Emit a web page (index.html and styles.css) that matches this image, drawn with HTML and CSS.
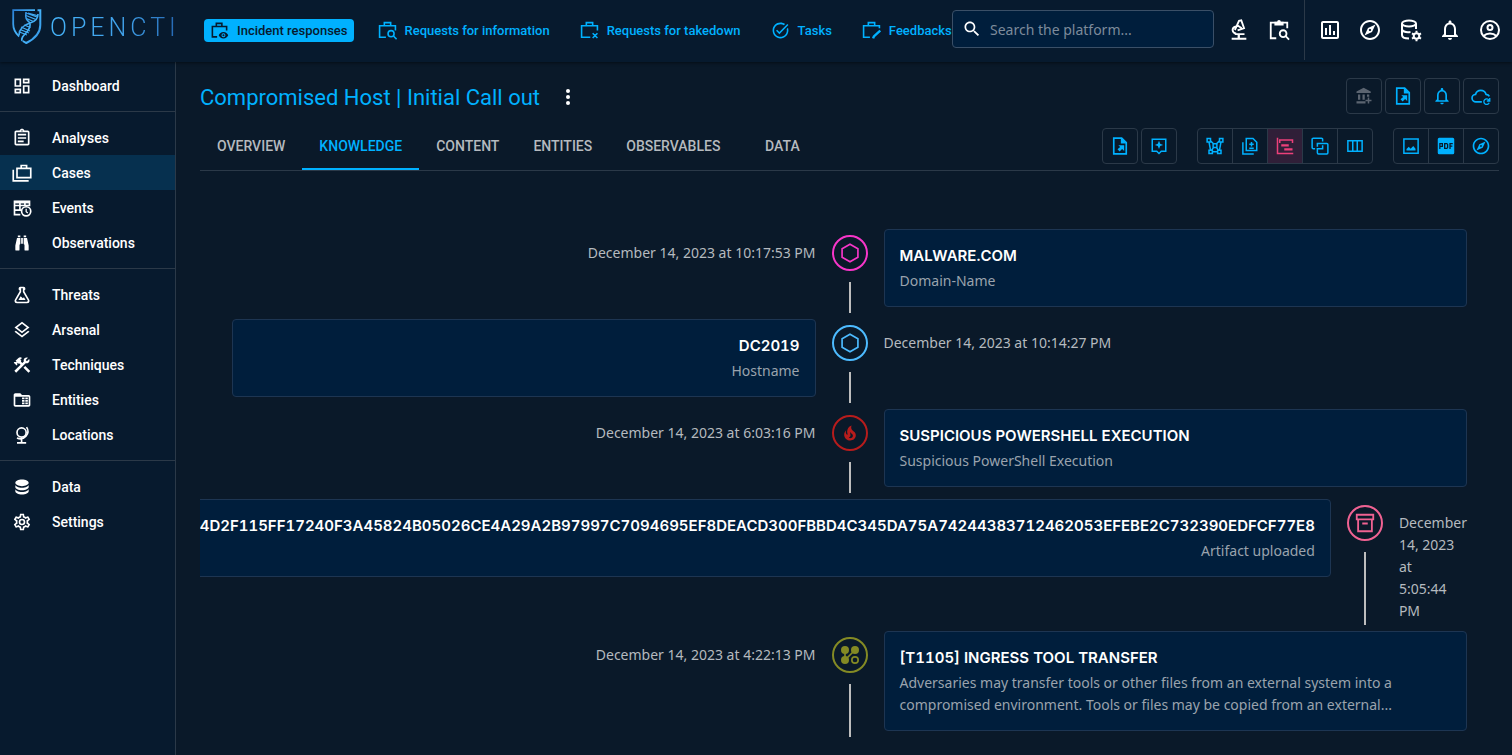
FILE: index.html
```html
<!DOCTYPE html>
<html lang="en">
<head>
<meta charset="utf-8">
<title>OpenCTI - Compromised Host</title>
<link rel="stylesheet" href="styles.css">
</head>
<body>
<svg class="sprite" aria-hidden="true">
  <symbol id="dashboard" viewBox="0 0 24 24"><path d="M19 5v2h-4V5h4M9 5v6H5V5h4m10 8v6h-4v-6h4M9 17v2H5v-2h4M21 3h-8v6h8V3zM11 3H3v10h8V3zm10 8h-8v10h8V11zm-10 4H3v6h8v-6z"/></symbol>
  <symbol id="analyses" viewBox="0 0 24 24"><path d="M7 15h7v2H7zm0-4h10v2H7zm0-4h10v2H7zm12-4h-4.180C14.400 1.840 13.300 1 12 1c-1.300 0-2.400.84-2.820 2H5c-1.100 0-2 .9-2 2v14c0 1.100.9 2 2 2h14c1.100 0 2-.9 2-2V5c0-1.100-.9-2-2-2zm-7-.25c.41 0 .75.34.75.75s-.34.75-.75.75-.75-.34-.75-.75.34-.75.75-.75zM19 19H5V5h14v14z"/></symbol>
  <symbol id="cases" viewBox="0 0 24 24"><g class="line"><path d="M6 6.500h16.500v11H6zM11 6V3h6.500v3M1.500 8v13.500H20"/></g></symbol>
  <symbol id="events" viewBox="0 0 24 24"><g class="line"><path d="M10 20H3V4h18v6M3 9h18M3 14.500h8M9.500 4v10M15.500 4v5"/><path d="M3 5h18" stroke-width="3"/><circle cx="17" cy="16" r="5.500"/><path d="M17 13v3.500l2 1.500" stroke-width="1.500"/></g></symbol>
  <symbol id="binoculars" viewBox="0 0 24 24"><path d="M11 6h2v7h-2V6M9 20a1 1 0 0 1-1 1H5a1 1 0 0 1-1-1v-5l2-9h4v7a1 1 0 0 1-1 1v6m1-15H7V3h3v2m5 15v-6a1 1 0 0 1-1-1V6h4l2 9v5a1 1 0 0 1-1 1h-3a1 1 0 0 1-1-1M14 5V3h3v2h-3z"/></symbol>
  <symbol id="flask" viewBox="0 0 24 24"><path d="M5 19a1 1 0 0 0 1 1h12a1 1 0 0 0 1-1c0-.21-.07-.41-.18-.57L13 8.350V4h-2v4.350L5.180 18.430c-.11.16-.18.36-.18.57m1 3a3 3 0 0 1-3-3c0-.6.18-1.160.5-1.630L9 7.810V6a1 1 0 0 1-1-1V4a2 2 0 0 1 2-2h4a2 2 0 0 1 2 2v1a1 1 0 0 1-1 1v1.810l5.500 9.560c.32.47.5 1.030.5 1.630a3 3 0 0 1-3 3H6m7-6l1.340-1.340L16.270 18H7.730l2.660-4.610L13 16z"/></symbol>
  <symbol id="layers" viewBox="0 0 24 24"><path d="M11.990 18.540l-7.370-5.730L3 14.070l9 7 9-7-1.630-1.270-7.380 5.740zM12 16l7.360-5.730L21 9l-9-7-9 7 1.630 1.270L12 16zm0-11.470L17.740 9 12 13.470 6.260 9 12 4.530z"/></symbol>
  <symbol id="tools" viewBox="0 0 24 24"><path d="M13.780 15.170l2.120-2.120 6 6-2.120 2.120zM17.500 10c1.930 0 3.500-1.570 3.500-3.500 0-.58-.16-1.120-.41-1.600l-2.700 2.700-1.490-1.490 2.700-2.700c-.48-.25-1.020-.41-1.600-.41C15.570 3 14 4.570 14 6.500c0 .41.08.8.21 1.160l-1.850 1.850-1.780-1.780.71-.71-1.410-1.410L12 3.490c-1.170-1.170-3.070-1.170-4.240 0L4.220 7.030l1.410 1.410H2.810l-.71.71 3.540 3.540.71-.71V9.150l1.410 1.410.71-.71 1.780 1.780-7.410 7.410 2.120 2.120L16.340 9.790c.36.13.75.21 1.160.21z"/></symbol>
  <symbol id="folder" viewBox="0 0 24 24"><path d="M20 6h-8l-2-2H4C2.900 4 2 4.900 2 6v12c0 1.100.9 2 2 2h16c1.100 0 2-.9 2-2V8c0-1.100-.9-2-2-2M4 18V8h16v10zM12 9h3v2h-3zm4 0h3v2h-3zm-4 3h3v2h-3zm4 0h3v2h-3zm-4 3h3v2h-3zm4 0h3v2h-3z"/></symbol>
  <symbol id="globe" viewBox="0 0 24 24"><g class="line"><circle cx="11.500" cy="9" r="5.500"/><path d="M17.500 2.500a9 9 0 0 1-11.500 13M11.500 17.500V21M6 21.500h11"/></g></symbol>
  <symbol id="database" viewBox="0 0 24 24"><path d="M12 3C7.580 3 4 4.790 4 7s3.580 4 8 4 8-1.790 8-4-3.580-4-8-4M4 9v3c0 2.210 3.580 4 8 4s8-1.790 8-4V9c0 2.210-3.580 4-8 4s-8-1.790-8-4m0 5v3c0 2.210 3.580 4 8 4s8-1.790 8-4v-3c0 2.210-3.580 4-8 4s-8-1.790-8-4z"/></symbol>
  <symbol id="cog" viewBox="0 0 24 24"><path d="M12 8a4 4 0 0 1 4 4 4 4 0 0 1-4 4 4 4 0 0 1-4-4 4 4 0 0 1 4-4m0 2a2 2 0 0 0-2 2 2 2 0 0 0 2 2 2 2 0 0 0 2-2 2 2 0 0 0-2-2m-2 12c-.25 0-.46-.18-.5-.42l-.37-2.650c-.63-.25-1.170-.59-1.690-.99l-2.490 1.010c-.22.08-.49 0-.61-.22l-2-3.460a.493.493 0 0 1 .12-.64l2.110-1.660L4.500 12l.07-1-2.110-1.630a.493.493 0 0 1-.12-.64l2-3.460c.12-.22.39-.31.61-.22l2.490 1c.52-.39 1.060-.73 1.690-.98l.37-2.650c.04-.24.25-.42.5-.42h4c.25 0 .46.18.5.42l.37 2.650c.63.25 1.170.59 1.690.98l2.490-1c.22-.09.49 0 .61.22l2 3.460c.13.22.07.49-.12.64L19.430 11l.07 1-.07 1 2.110 1.630c.19.15.25.42.12.64l-2 3.460c-.12.22-.39.31-.61.22l-2.490-1c-.52.39-1.060.73-1.690.98l-.37 2.650c-.04.24-.25.42-.5.42h-4m1.250-18l-.37 2.610c-1.200.25-2.260.89-3.030 1.780L5.440 7.350l-.75 1.300L6.800 10.200a5.550 5.550 0 0 0 0 3.600l-2.120 1.560.75 1.300 2.430-1.040c.77.88 1.820 1.520 3.010 1.760l.37 2.620h1.520l.37-2.610c1.190-.25 2.240-.89 3.010-1.770l2.430 1.040.75-1.300-2.120-1.550c.4-1.170.4-2.440 0-3.610l2.110-1.550-.75-1.300-2.410 1.040a5.420 5.420 0 0 0-3.030-1.770L12.750 4h-1.500z"/></symbol>
  <symbol id="case-eye" viewBox="0 0 24 24"><g class="line"><path d="M9 20H3V7h18v5M8 7V3h7v4"/></g><path fill-rule="evenodd" d="M17 14c-3 0-5 1.800-6 4 1 2.200 3 4 6 4s5-1.800 6-4c-1-2.200-3-4-6-4zm0 1.500a2.500 2.500 0 1 1 0 5 2.500 2.500 0 0 1 0-5z"/><circle cx="17" cy="18" r="1.300"/></symbol>
  <symbol id="case-search" viewBox="0 0 24 24"><g class="line"><path d="M10 20.500H2V6h20v6M8 6V2h8v4"/><circle cx="16.500" cy="16" r="3.800"/><path d="M19.500 19l4 4"/></g></symbol>
  <symbol id="case-x" viewBox="0 0 24 24"><g class="line"><path d="M13 20.500H2V6h20v6M8 6V2h8v4M16 15.500l6 6M22 15.500l-6 6"/></g></symbol>
  <symbol id="case-edit" viewBox="0 0 24 24"><g class="line"><path d="M10 20.500H2V6h20v3M8 6V2h8v4"/><path d="M14 22l1-2.500 8-7.500" stroke-width="3"/></g></symbol>
  <symbol id="task" viewBox="0 0 24 24"><path d="M22 5.180L10.590 16.600l-4.240-4.240 1.410-1.410 2.830 2.830 10-10L22 5.180zm-2.210 5.040c.13.57.21 1.170.21 1.780 0 4.420-3.580 8-8 8s-8-3.580-8-8 3.580-8 8-8c1.580 0 3.040.46 4.280 1.250l1.440-1.440C16.100 2.670 14.130 2 12 2 6.480 2 2 6.480 2 12s4.480 10 10 10 10-4.480 10-10c0-1.190-.22-2.330-.6-3.390l-1.610 1.610z"/></symbol>
  <symbol id="search" viewBox="0 0 24 24"><path d="M15.500 14h-.79l-.28-.27C15.410 12.590 16 11.110 16 9.500 16 5.910 13.090 3 9.500 3S3 5.910 3 9.500 5.910 16 9.500 16c1.610 0 3.090-.59 4.230-1.570l.27.28v.79l5 4.990L20.490 19l-4.990-5zm-6 0C7.010 14 5 11.990 5 9.500S7.010 5 9.500 5 14 7.010 14 9.500 11.990 14 9.500 14z"/></symbol>
  <symbol id="microscope" viewBox="0 0 24 24"><path d="M4 20.500h16v2H4zM10.500 16.500H13v4h-2.500zM6 15.500h12v2H8z"/><g class="line"><path d="M9 16C4 15 3.500 9.500 8.500 8M7.500 12L12 2l2.500-.5L17.500 10l-7 2.500M10.500 7l4.500 3"/></g></symbol>
  <symbol id="paste-search" viewBox="0 0 24 24"><g class="line"><path d="M9 21H3V4h18v6"/><circle cx="16.500" cy="16" r="3.700"/><path d="M19 18.500l4 4"/></g><path d="M7 3h3a2 2 0 0 1 4 0h3v4H7z"/></symbol>
  <symbol id="chart" viewBox="0 0 24 24"><path d="M9 17H7v-7h2v7zm4 0h-2V7h2v10zm4 0h-2v-4h2v4zm2 2H5V5h14v14zm0-16H5c-1.100 0-2 .9-2 2v14c0 1.100.9 2 2 2h14c1.100 0 2-.9 2-2V5c0-1.100-.9-2-2-2z"/></symbol>
  <symbol id="compass" viewBox="0 0 24 24"><path d="M12 2C6.480 2 2 6.480 2 12s4.480 10 10 10 10-4.480 10-10S17.520 2 12 2zm0 18c-4.410 0-8-3.590-8-8s3.590-8 8-8 8 3.590 8 8-3.590 8-8 8zm-5.500-2.500l7.510-3.490L17.500 6.500 9.990 9.990 6.500 17.500zm5.500-6.600c.61 0 1.100.49 1.100 1.100s-.49 1.100-1.100 1.100-1.100-.49-1.100-1.100.49-1.100 1.100-1.100z"/></symbol>
  <symbol id="db-cog" viewBox="0 0 24 24"><g class="line"><ellipse cx="11" cy="5.500" rx="7" ry="3"/><path d="M4 5.500V17c0 2 2.500 3.500 7 3.500M18 5.500V11M4 11.500c1 2 4.500 3 8.500 2.500"/><circle cx="18.500" cy="18" r="2.800"/><path d="M18.500 12.800v2M18.500 21.200v2M14 15.400l1.700 1M21.300 19.600l1.700 1M14 20.600l1.700-1M21.300 16.400l1.700-1"/></g></symbol>
  <symbol id="bell" viewBox="0 0 24 24"><path d="M12 22c1.100 0 2-.9 2-2h-4c0 1.100.9 2 2 2zm6-6v-5c0-3.070-1.630-5.640-4.500-6.320V4c0-.83-.67-1.500-1.500-1.500s-1.500.67-1.500 1.500v.68C7.640 5.360 6 7.920 6 11v5l-2 2v1h16v-1l-2-2zm-2 1H8v-6c0-2.480 1.510-4.500 4-4.500s4 2.020 4 4.500v6z"/></symbol>
  <symbol id="account" viewBox="0 0 24 24"><g class="line"><circle cx="12" cy="12" r="9"/><circle cx="12" cy="9.500" r="2.500"/><path d="M5.500 18c3.500-3.200 9.500-3.200 13 0"/></g></symbol>
  <symbol id="bank" viewBox="0 0 24 24"><path d="M11.500 1L2 6v2h19V6zM4 10h3v7H4zM10 10h3v7h-3zM16 10h3v3h-3zM2 19h12v3H2zM17 14h2v3h3v2h-3v3h-2v-3h-3v-2h3z"/></symbol>
  <symbol id="file-export" viewBox="0 0 24 24"><g class="line"><path d="M14 2.500H4.500v19h15V8z"/></g><path d="M13 2v7h7zM10 11h7v7l-2.500-2.500L11.500 18.500 9 16l3.200-2.800z"/></symbol>
  <symbol id="cloud" viewBox="0 0 24 24"><g class="line"><path d="M13 19H6a4.500 4.500 0 0 1-.5-9 6.500 6.500 0 0 1 12.500 0c2 .2 3.500 1.300 4 2.500"/><path d="M21.500 17a3.300 3.300 0 1 0 .3 3M22.500 14.500V18H19" stroke-width="1.600"/></g></symbol>
  <symbol id="assistant" viewBox="0 0 24 24"><g class="line"><path d="M3 3h18v16h-6l-3 3-3-3H3z"/></g><path d="M12 5l1.600 3.900L17.500 10.500l-3.900 1.600L12 16l-1.600-3.900L6.500 10.500l3.900-1.600z"/></symbol>
  <symbol id="graph" viewBox="0 0 24 24"><g class="line"><path d="M1.500 2h4.500v4.500H1.500zM18 2h4.500v4.500H18zM4 17.500h4.500V22H4zM15.500 17.500H20V22h-4.500zM9.500 9h5v5h-5zM6 5l4 4M18 5l-4 4M4 6.500l2 11M20 6.500l-2 11M8.500 19.500h7M10 14l-2.500 3.500M14 14l2.500 3.500"/></g></symbol>
  <symbol id="diff" viewBox="0 0 24 24"><g class="line"><path d="M7 2h9l5 5v11H7zM2.500 7v15.500H17M14 6.500v6M11 9.500h6M11 15h6"/></g></symbol>
  <symbol id="timeline" viewBox="0 0 24 24"><g class="line"><path d="M2 1v21h21M5 8V4h17v4"/></g><path d="M7 9.500h10v3H7zM11 15h11v3H11z"/></symbol>
  <symbol id="correlation" viewBox="0 0 24 24"><g class="line"><path d="M15.500 6V3a1.500 1.500 0 0 0-1.500-1.500H3A1.500 1.500 0 0 0 1.500 3v11A1.500 1.500 0 0 0 3 15.500h2.500M13 15.500h2.500V11M8.500 13V8.500H21a1.500 1.500 0 0 1 1.500 1.500v11a1.500 1.500 0 0 1-1.500 1.500H10A1.500 1.500 0 0 1 8.500 21v-5.500H14"/></g></symbol>
  <symbol id="columns" viewBox="0 0 24 24"><g class="line"><path d="M2.500 5h19v14h-19zM9 5v14M15 5v14"/></g></symbol>
  <symbol id="image" viewBox="0 0 24 24"><g class="line"><path d="M2.500 2.500h19v19h-19z"/></g><path d="M6 18v-2l3-3 2.500 2.500L15 12l3 3.500V18z"/></symbol>
  <symbol id="pdf" viewBox="0 0 24 24"><path fill-rule="evenodd" d="M3 1h18a2 2 0 0 1 2 2v18a2 2 0 0 1-2 2H3a2 2 0 0 1-2-2V3a2 2 0 0 1 2-2zm0 7v8h1.600v-2.600H8V8zm1.600 1.600h1.800v2.200H4.600zM9.400 8v8h4l1.600-1.600V9.600L13.400 8zm1.700 1.600h2.200v4.800h-2.200zM16.500 8v8h1.700v-3h2.300v-1.600h-2.300V9.600H21V8z"/></symbol>
  <symbol id="hexagon" viewBox="0 0 24 24"><path class="line" d="M12 1.500l9.500 5.300v10.400L12 22.500l-9.500-5.300V6.800z"/></symbol>
  <symbol id="fire" viewBox="0 0 24 24"><path d="M17.660 11.200c-.23-.3-.51-.56-.77-.82-.67-.6-1.430-1.030-2.070-1.660C13.330 7.260 13 4.850 13.950 3c-.95.23-1.780.75-2.490 1.320-2.590 2.080-3.610 5.750-2.390 8.900.04.1.08.2.08.33 0 .22-.15.42-.35.5-.23.1-.47.04-.66-.12a.58.58 0 0 1-.14-.17c-1.130-1.430-1.310-3.480-.55-5.120C5.780 10 4.870 12.300 5 14.470c.06.5.12 1 .29 1.500.14.6.41 1.200.71 1.730 1.080 1.730 2.950 2.970 4.960 3.220 2.140.27 4.430-.12 6.070-1.600 1.830-1.660 2.470-4.320 1.530-6.600l-.13-.26c-.21-.46-.77-1.260-.77-1.260m-3.160 6.300c-.28.24-.74.5-1.100.6-1.120.4-2.240-.16-2.900-.82 1.190-.28 1.900-1.160 2.110-2.050.17-.8-.15-1.460-.28-2.230-.12-.74-.1-1.370.17-2.060.19.38.39.76.63 1.060.77 1 1.980 1.440 2.240 2.800.04.14.06.28.06.43.03.82-.33 1.720-.93 2.270z"/></symbol>
  <symbol id="archive" viewBox="0 0 24 24"><path class="line" d="M3 3h18v5H3zM4.500 8v13h15V8M9 12.500h6"/></symbol>
  <symbol id="pattern" viewBox="0 0 24 24"><circle cx="6" cy="6" r="4.800"/><circle cx="18" cy="6" r="4.800"/><circle cx="6" cy="18" r="4.800"/><g class="line"><circle cx="18" cy="18" r="3.800"/><path d="M6 6v12L18 6"/></g></symbol>
</svg>

<header class="topbar">
  <a class="logo" href="#" aria-label="OpenCTI">
    <svg class="logo-mark" viewBox="0 0 30 36" aria-hidden="true">
      <defs><linearGradient id="mark" x1="0" y1="0" x2="1" y2="1"><stop offset="0" stop-color="#2a7fd4"/><stop offset=".5" stop-color="#46b4fa"/><stop offset="1" stop-color="#2f8fe0"/></linearGradient></defs>
      <g fill="none" stroke="url(#mark)">
        <path d="M23 1.200H1.200V15c0 5 2 9 6 12.500" stroke-width="1.800"/>
        <path d="M25.500 1.200h2.800V16c0 8-5 13.500-14 18-1.500-.7-2.500-1.300-3.500-2" stroke-width="2"/>
        <path d="M14 3c-1 7 1 8 3 10 3 3-1 9-3 11-3 3-5 5-4 8M26 5c0 6-4 8-8 9-6 2-11 5-11 12" stroke-width="1.600"/>
        <path d="M14 4l11 4M14 6.500l10 4M14.500 9.500l7 3M16 4l9 2.500M9 18l9 4M8 20.500l9 3.500M7.500 23l7.500 3M12 16l6.500 2.500" stroke-width="1.100"/>
      </g>
    </svg>
    <span class="logo-word">OPENCTI</span>
  </a>
  <nav class="case-nav" aria-label="Case types">
    <a class="case-link active" href="#"><svg class="i19"><use href="#case-eye"/></svg>Incident responses</a>
    <a class="case-link" href="#"><svg class="i19"><use href="#case-search"/></svg>Requests for information</a>
    <a class="case-link" href="#"><svg class="i19"><use href="#case-x"/></svg>Requests for takedown</a>
    <a class="case-link" href="#"><svg class="i19"><use href="#task"/></svg>Tasks</a>
    <a class="case-link" href="#"><svg class="i19"><use href="#case-edit"/></svg>Feedbacks</a>
  </nav>
  <label class="search"><svg class="i20"><use href="#search"/></svg><input type="search" placeholder="Search the platform..." aria-label="Search the platform"></label>
  <div class="actions">
    <button class="icon-btn" aria-label="Advanced search"><svg class="i22"><use href="#microscope"/></svg></button>
    <button class="icon-btn" aria-label="Bulk search"><svg class="i22"><use href="#paste-search"/></svg></button>
  </div>
  <div class="actions account-actions">
    <button class="icon-btn" aria-label="Dashboards"><svg class="i24"><use href="#chart"/></svg></button>
    <button class="icon-btn" aria-label="Investigations"><svg class="i24"><use href="#compass"/></svg></button>
    <button class="icon-btn" aria-label="Data management"><svg class="i24"><use href="#db-cog"/></svg></button>
    <button class="icon-btn" aria-label="Notifications"><svg class="i24"><use href="#bell"/></svg></button>
    <button class="icon-btn" aria-label="Profile"><svg class="i24"><use href="#account"/></svg></button>
  </div>
</header>

<div class="shell">
  <nav class="sidebar" aria-label="Main">
    <div class="group"><a href="#"><svg class="i20"><use href="#dashboard"/></svg>Dashboard</a></div>
    <div class="group">
      <a href="#"><svg class="i20"><use href="#analyses"/></svg>Analyses</a>
      <a class="active" href="#"><svg class="i20"><use href="#cases"/></svg>Cases</a>
      <a href="#"><svg class="i20"><use href="#events"/></svg>Events</a>
      <a href="#"><svg class="i20"><use href="#binoculars"/></svg>Observations</a>
    </div>
    <div class="group">
      <a href="#"><svg class="i20"><use href="#flask"/></svg>Threats</a>
      <a href="#"><svg class="i20"><use href="#layers"/></svg>Arsenal</a>
      <a href="#"><svg class="i20"><use href="#tools"/></svg>Techniques</a>
      <a href="#"><svg class="i20"><use href="#folder"/></svg>Entities</a>
      <a href="#"><svg class="i20"><use href="#globe"/></svg>Locations</a>
    </div>
    <div class="group">
      <a href="#"><svg class="i20"><use href="#database"/></svg>Data</a>
      <a href="#"><svg class="i20"><use href="#cog"/></svg>Settings</a>
    </div>
  </nav>

  <main class="content">
    <div class="title-row">
      <h1>Compromised Host | Initial Call out</h1>
      <button class="more" aria-label="More actions"><svg class="i24" viewBox="0 0 24 24"><circle cx="12" cy="6" r="2"/><circle cx="12" cy="12" r="2"/><circle cx="12" cy="18" r="2"/></svg></button>
      <div class="tools">
        <button class="tool" disabled aria-label="Organizations"><svg class="i18"><use href="#bank"/></svg></button>
        <button class="tool" aria-label="Export file"><svg class="i20"><use href="#file-export"/></svg></button>
        <button class="tool" aria-label="Subscribe"><svg class="i20"><use href="#bell"/></svg></button>
        <button class="tool" aria-label="Enrichment"><svg class="i20"><use href="#cloud"/></svg></button>
      </div>
    </div>
    <div class="tab-row">
      <div class="tabs" role="tablist">
        <button class="tab" role="tab">Overview</button>
        <button class="tab active" role="tab" aria-selected="true">Knowledge</button>
        <button class="tab" role="tab">Content</button>
        <button class="tab" role="tab">Entities</button>
        <button class="tab" role="tab">Observables</button>
        <button class="tab" role="tab">Data</button>
      </div>
      <div class="toolsets">
        <div class="tools">
          <button class="tool" aria-label="Export report"><svg class="i20"><use href="#file-export"/></svg></button>
          <button class="tool" aria-label="Suggestions"><svg class="i18"><use href="#assistant"/></svg></button>
        </div>
        <div class="segmented">
          <button class="seg" aria-label="Graph view"><svg class="i18"><use href="#graph"/></svg></button>
          <button class="seg" aria-label="Content mapping"><svg class="i18"><use href="#diff"/></svg></button>
          <button class="seg active" aria-label="Timeline view"><svg class="i18"><use href="#timeline"/></svg></button>
          <button class="seg" aria-label="Correlation view"><svg class="i18"><use href="#correlation"/></svg></button>
          <button class="seg" aria-label="Matrix view"><svg class="i18"><use href="#columns"/></svg></button>
        </div>
        <div class="segmented">
          <button class="seg" aria-label="Export to image"><svg class="i18"><use href="#image"/></svg></button>
          <button class="seg" aria-label="Export to PDF"><svg class="i18"><use href="#pdf"/></svg></button>
          <button class="seg" aria-label="Investigate"><svg class="i20"><use href="#compass"/></svg></button>
        </div>
      </div>
    </div>

    <ol class="timeline">
      <li class="event">
        <time class="date">December 14, 2023 at 10:17:53 PM</time>
        <div class="rail pink"><span class="dot"><svg class="i20"><use href="#hexagon"/></svg></span><span class="stem"></span></div>
        <div class="side"><article class="card"><h2>MALWARE.COM</h2><p>Domain-Name</p></article></div>
      </li>
      <li class="event reverse">
        <time class="date">December 14, 2023 at 10:14:27 PM</time>
        <div class="rail blue"><span class="dot"><svg class="i20"><use href="#hexagon"/></svg></span><span class="stem"></span></div>
        <div class="side"><article class="card"><h2>DC2019</h2><p>Hostname</p></article></div>
      </li>
      <li class="event">
        <time class="date">December 14, 2023 at 6:03:16 PM</time>
        <div class="rail red"><span class="dot"><svg class="i20"><use href="#fire"/></svg></span><span class="stem"></span></div>
        <div class="side"><article class="card"><h2>SUSPICIOUS POWERSHELL EXECUTION</h2><p>Suspicious PowerShell Execution</p></article></div>
      </li>
      <li class="event reverse">
        <time class="date">December 14, 2023 at<br>5:05:44 PM</time>
        <div class="rail rose"><span class="dot"><svg class="i22"><use href="#archive"/></svg></span><span class="stem"></span></div>
        <div class="side"><article class="card"><h2>94D2F115FF17240F3A45824B05026CE4A29A2B97997C7094695EF8DEACD300FBBD4C345DA75A74244383712462053EFEBE2C732390EDFCF77E8</h2><p>Artifact uploaded</p></article></div>
      </li>
      <li class="event">
        <time class="date">December 14, 2023 at 4:22:13 PM</time>
        <div class="rail olive"><span class="dot"><svg class="i20"><use href="#pattern"/></svg></span><span class="stem"></span></div>
        <div class="side"><article class="card"><h2>[T1105] INGRESS TOOL TRANSFER</h2><p>Adversaries may transfer tools or other files from an external system into a compromised environment. Tools or files may be copied from an external...</p></article></div>
      </li>
    </ol>
  </main>
</div>
</body>
</html>
```
FILE: styles.css
```css
* { box-sizing: border-box; }
body {
  margin: 0;
  min-height: 100vh;
  display: flex;
  flex-direction: column;
  background: #0a1929;
  color: #fff;
  font-family: Roboto, "Noto Sans", sans-serif;
  font-size: 14px;
}
a { color: inherit; text-decoration: none; }
button {
  padding: 0;
  border: 0;
  background: none;
  color: inherit;
  font: inherit;
  cursor: pointer;
}
svg { fill: currentColor; flex: none; }
.sprite { display: none; }
.line { fill: none; stroke: currentColor; stroke-width: 2; }
.i18 { width: 18px; height: 18px; }
.i19 { width: 19px; height: 19px; }
.i20 { width: 20px; height: 20px; }
.i22 { width: 22px; height: 22px; }
.i24 { width: 24px; height: 24px; }

.topbar {
  display: flex;
  align-items: center;
  height: 62px;
  padding-bottom: 2px;
  background: #071a2e;
  box-shadow: 0 1px 3px rgba(0, 0, 0, .5);
  z-index: 1;
}
.logo {
  display: flex;
  align-items: center;
  align-self: flex-start;
  gap: 8px;
  flex: 0 0 204px;
  height: 54px;
  padding-left: 12px;
}
.logo-mark { width: 30px; height: 36px; }
.logo-word {
  font-size: 25px;
  font-weight: 300;
  letter-spacing: 4px;
  background: linear-gradient(90deg, #46b4fa, #3f9fe8 60%, #2465b0);
  -webkit-background-clip: text;
  background-clip: text;
  color: transparent;
}
.case-nav { display: flex; gap: 18px; white-space: nowrap; }
.case-link {
  display: flex;
  align-items: center;
  gap: 8px;
  height: 23px;
  padding: 0 6px;
  border-radius: 4px;
  color: #00b1ff;
  font-size: 13px;
  font-weight: 500;
}
.case-link:last-child { padding-right: 0; }
.case-link.active { background: #00b1ff; color: #071a2e; }
.search {
  display: flex;
  align-items: center;
  gap: 8px;
  flex: 0 0 262px;
  height: 38px;
  margin: 0 5px 2px auto;
  padding: 0 9px;
  border: 1px solid #3a4f67;
  border-radius: 4px;
  background: #001e3c;
}
.search input {
  min-width: 0;
  flex: 1;
  padding: 0;
  border: 0;
  outline: 0;
  background: none;
  color: #fff;
  font-family: "Noto Sans", sans-serif;
  font-size: 14px;
}
.search input::placeholder { color: #7d8b9b; opacity: 1; }
.actions { display: flex; align-items: center; align-self: stretch; }
.account-actions { margin-left: 5px; padding: 0 2px 0 5px; border-left: 1px solid #2b3948; }
.icon-btn { display: grid; place-items: center; width: 40px; height: 40px; }

.shell { display: flex; flex: 1; }
.sidebar {
  flex: 0 0 176px;
  background: #071a2e;
  border-right: 1px solid #2b3948;
}
.group { padding: 8px 0; border-bottom: 1px solid #2b3948; }
.group:first-child { padding-top: 6px; }
.group:last-child { border-bottom: 0; }
.group a {
  display: flex;
  align-items: center;
  gap: 20px;
  height: 35px;
  padding-left: 12px;
  font-weight: 500;
}
.group a.active { background: #06304f; }

.content { flex: 1; min-width: 0; padding: 16px 13px 0 24px; }
.title-row { display: flex; align-items: center; height: 36px; }
h1 { margin: 0; padding-top: 2px; color: #00b1ff; font-size: 22px; font-weight: 400; }
.more { display: grid; margin: 2px 0 0 16px; }
.tools { display: flex; gap: 3px; }
.title-row .tools { margin-left: auto; }
.tool, .segmented { border: 1px solid #2b3948; border-radius: 4px; color: #00b1ff; }
.tool { display: grid; place-items: center; width: 36px; height: 36px; }
.tool:disabled { color: #5b6470; }
.tab-row {
  display: flex;
  justify-content: space-between;
  margin-top: 8px;
  border-bottom: 1px solid #2b3948;
}
.tabs { display: flex; }
.tab {
  min-width: 90px;
  height: 48px;
  padding: 2px 17px 0;
  border-bottom: 2px solid transparent;
  color: #b5babf;
  font-weight: 500;
  text-transform: uppercase;
}
.tab.active { color: #00b1ff; border-color: #00b1ff; }
.toolsets { display: flex; align-items: center; gap: 20px; }
.segmented { display: flex; }
.seg { display: grid; place-items: center; width: 35px; height: 34px; }
.seg + .seg { border-left: 1px solid #2b3948; }
.seg:first-child { width: 34px; }
.seg.active { background: #301f38; color: #ec407a; }

.timeline {
  margin: 0;
  padding: 52px 16px 0;
  overflow: hidden;
  list-style: none;
  font-family: "Noto Sans", sans-serif;
}
.event { display: flex; }
.event.reverse { flex-direction: row-reverse; }
.date {
  flex: 1;
  padding: 19px 16px 3px;
  color: #b5babf;
  line-height: 22px;
  text-align: right;
}
.side { flex: 1; padding: 6px 16px; }
.reverse .date { text-align: left; }
.reverse .card { text-align: right; }
.rail { display: flex; flex-direction: column; align-items: center; }
.dot {
  display: grid;
  place-items: center;
  width: 36px;
  height: 36px;
  margin: 12px 0 11px;
  border: 2px solid;
  border-radius: 50%;
}
.stem { flex: 1; width: 2px; background: #bdbdbd; }
.pink { color: #f736c9; }
.blue { color: #4dbbff; }
.red { color: #b71c1c; }
.rose { color: #f06292; }
.olive { color: #848a24; }
.card {
  padding: 16px 15px 14px;
  border: 1px solid #1d3552;
  border-radius: 4px;
  background: #001e3c;
}
.card h2 {
  margin: 0 0 4px;
  font-family: Inter, sans-serif;
  font-size: 15px;
  font-weight: 600;
  font-variant-numeric: tabular-nums;
  line-height: 20px;
}
.card p { margin: 0; color: #9aa3ad; line-height: 22px; }
```
